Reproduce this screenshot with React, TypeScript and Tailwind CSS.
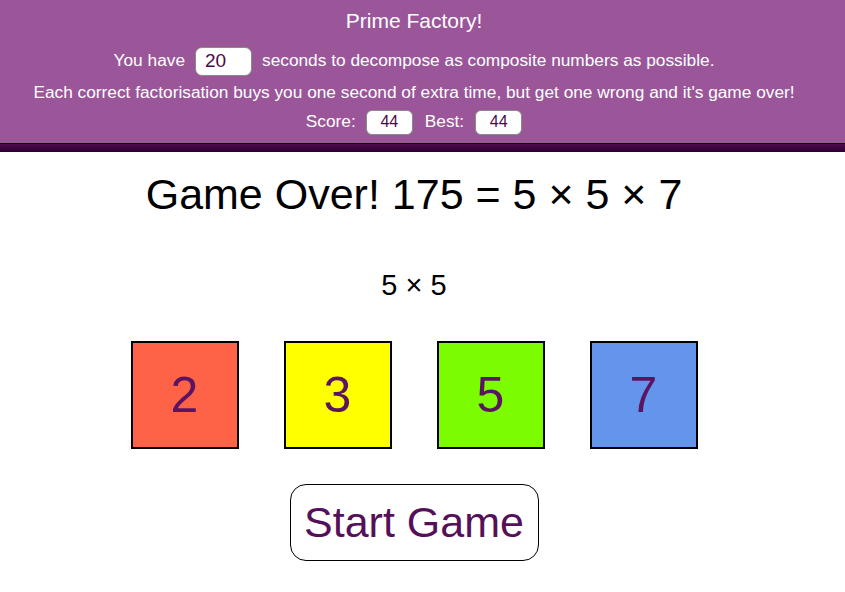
import { useState } from 'react'

// Primes the player can tap to build a factorisation
const primes = [
  { value: 2, bg: 'bg-[#ff6347]' },
  { value: 3, bg: 'bg-[#ffff00]' },
  { value: 5, bg: 'bg-[#7cfc00]' },
  { value: 7, bg: 'bg-[#6495ed]' },
]

export default function App() {
  const [seconds, setSeconds] = useState('20')
  const score = 44
  const best = 44

  return (
    <div className="min-h-[592px] bg-white font-['Liberation_Sans',Arial,sans-serif]">
      {/* header */}
      <div className="bg-[#9a5699] text-white">
        <div className="w-[828px] flex flex-col items-center">
          <h1 className="h-[42px] flex items-center text-[21px] font-normal">Prime Factory!</h1>
          <div className="h-[38px] flex items-center gap-[10px] text-[17.3px]">
            <span>You have</span>
            <input
              value={seconds}
              onChange={(e) => setSeconds(e.target.value)}
              className="w-[57px] h-[29px] rounded-[7px] border border-[#8a8a8a] bg-white px-[9px] text-[19px] text-[#4a0a48] outline-none"
            />
            <span>seconds to decompose as composite numbers as possible.</span>
          </div>
          <p className="h-[26px] flex items-center text-[17.3px]">
            Each correct factorisation buys you one second of extra time, but get one wrong and it's game over!
          </p>
          <div className="h-[32px] flex items-center text-[17.3px]">
            <span>Score:</span>
            <span className="ml-[10px] w-[47px] h-[25px] rounded-[6px] border border-[#8a8a8a] bg-white text-[16px] text-[#4a0a48] flex items-center justify-center">
              {score}
            </span>
            <span className="ml-[12px]">Best:</span>
            <span className="ml-[11px] w-[47px] h-[25px] rounded-[6px] border border-[#8a8a8a] bg-white text-[16px] text-[#4a0a48] flex items-center justify-center">
              {best}
            </span>
          </div>
          <div className="h-[5px]" />
        </div>
      </div>
      <div className="h-[9px] border-t border-black bg-gradient-to-b from-[#4e0d4c] to-[#2c0030]" />

      {/* game area */}
      <div className="w-[828px] flex flex-col items-center text-black">
        <h2 className="mt-[19px] text-[43px] leading-[46px] font-normal">Game Over! 175 = 5 × 5 × 7</h2>
        <div className="mt-[54px] text-[29px] leading-[28px]">5 × 5</div>
        <div className="mt-[42px] flex gap-[45px]">
          {primes.map((p) => (
            <button
              key={p.value}
              className={`w-[108px] h-[108px] border-2 border-black ${p.bg} text-[50px] text-[#5a1462] flex items-center justify-center`}
            >
              {p.value}
            </button>
          ))}
        </div>
        <button className="mt-[35px] w-[249px] h-[77px] rounded-[16px] border border-black bg-white text-[43px] text-[#55105a] flex items-center justify-center">
          Start Game
        </button>
      </div>
    </div>
  )
}
